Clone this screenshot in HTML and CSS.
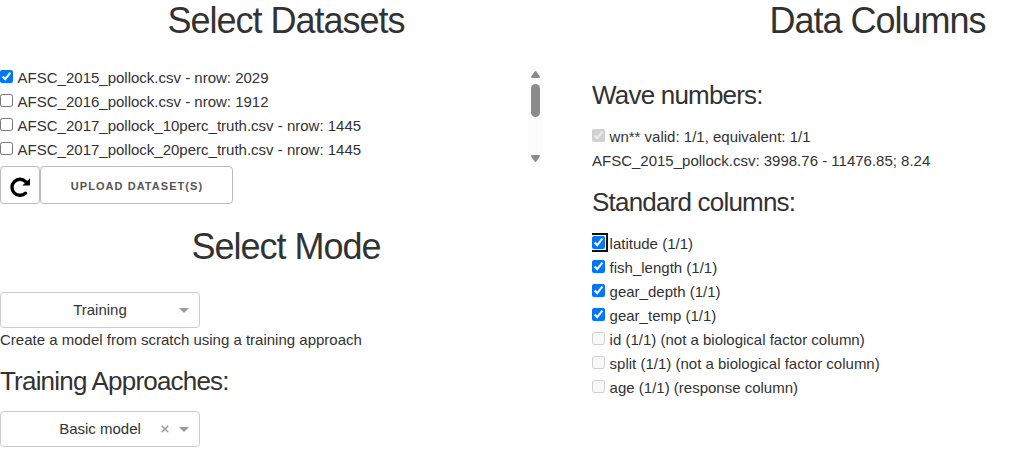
FILE: index.html
```html
<!DOCTYPE html>
<html lang="en">
<head>
<meta charset="utf-8">
<title>Datasets</title>
<link rel="stylesheet" href="styles.css">
</head>
<body>
<main class="layout">
  <section class="column">
    <h2 class="title">Select Datasets</h2>
    <div class="dataset-list">
      <div class="options">
        <label class="option"><input class="check" type="checkbox" checked> AFSC_2015_pollock.csv - nrow: 2029</label>
        <label class="option"><input class="check" type="checkbox"> AFSC_2016_pollock.csv - nrow: 1912</label>
        <label class="option"><input class="check" type="checkbox"> AFSC_2017_pollock_10perc_truth.csv - nrow: 1445</label>
        <label class="option"><input class="check" type="checkbox"> AFSC_2017_pollock_20perc_truth.csv - nrow: 1445</label>
      </div>
      <svg class="scrollbar" viewBox="0 0 15 99" aria-hidden="true">
        <path d="M7.5 6 11 11H4z" class="thumb arrow"/>
        <rect x="3" y="18" width="9" height="33" rx="4.5" class="thumb"/>
        <path d="M7.5 95 11 90H4z" class="thumb arrow"/>
      </svg>
    </div>
    <div class="actions">
      <button class="button button-icon" aria-label="Refresh">
        <svg class="refresh" viewBox="0 0 20 20"><path d="M15.4 16.2A8 8 0 1 1 15.6 4.6" class="refresh-arc"/><path d="M20 1.2V8.6H12.4z"/></svg>
      </button>
      <button class="button button-upload">Upload Dataset(s)</button>
    </div>
    <h2 class="title title-mode">Select Mode</h2>
    <div class="select">
      <span class="value">Training</span>
      <span class="controls"><span class="caret"></span></span>
    </div>
    <p class="text">Create a model from scratch using a training approach</p>
    <h4 class="subtitle">Training Approaches:</h4>
    <div class="select">
      <span class="value">Basic model</span>
      <span class="controls"><svg class="clear" viewBox="0 0 8 8"><path d="M.7.7 7.3 7.3M7.3.7.7 7.3"/></svg><span class="caret"></span></span>
    </div>
  </section>
  <section class="column column-data">
    <h2 class="title">Data Columns</h2>
    <h4 class="subtitle">Wave numbers:</h4>
    <label class="option"><input class="check" type="checkbox" checked disabled> wn** valid: 1/1, equivalent: 1/1</label>
    <p class="text">AFSC_2015_pollock.csv: 3998.76 - 11476.85; 8.24</p>
    <h4 class="subtitle">Standard columns:</h4>
    <div class="options">
      <label class="option"><input class="check check-focus" type="checkbox" checked> latitude (1/1)</label>
      <label class="option"><input class="check" type="checkbox" checked> fish_length (1/1)</label>
      <label class="option"><input class="check" type="checkbox" checked> gear_depth (1/1)</label>
      <label class="option"><input class="check" type="checkbox" checked> gear_temp (1/1)</label>
      <label class="option"><input class="check" type="checkbox" disabled> id (1/1) (not a biological factor column)</label>
      <label class="option"><input class="check" type="checkbox" disabled> split (1/1) (not a biological factor column)</label>
      <label class="option"><input class="check" type="checkbox" disabled> age (1/1) (response column)</label>
    </div>
  </section>
</main>
</body>
</html>
```
FILE: styles.css
```css
* { box-sizing: border-box; }
body {
  margin: 0;
  background: #fff;
  color: #323232;
  font: 15px/24px "Liberation Sans", Arial, sans-serif;
}
.layout { display: flex; gap: 20px; }
.column { flex: 0 0 572px; }
.column-data { flex: 1; min-width: 0; }
.title {
  margin: -2px 0 23px;
  font-size: 36px;
  font-weight: 300;
  line-height: 45px;
  letter-spacing: -1px;
  text-align: center;
}
.title-mode { margin-top: 20px; }
.column-data .title { padding-left: 127px; }
.subtitle {
  margin: 12px 0;
  font-size: 26px;
  font-weight: 300;
  line-height: 35px;
  letter-spacing: -0.8px;
}
.title + .subtitle { margin-top: 35px; }
.text { margin: 0; }
.dataset-list { display: flex; justify-content: space-between; width: 543px; height: 100px; overflow: hidden; }
.scrollbar { width: 15px; height: 99px; background: #fcfcfc; }
.thumb { fill: #8b8b8b; }
.arrow { stroke: #8b8b8b; stroke-width: 2; stroke-linejoin: round; }
.options { overflow: hidden; flex: 1; }
.option { display: flex; gap: 4.6px; }
.check { width: 13px; height: 13px; margin: 4px 0 0; }
.check-focus { outline: 2px solid #101010; outline-offset: 1px; border-radius: 2px; }
.actions { display: flex; }
.button {
  height: 38px;
  padding: 0;
  border: 1px solid #bbb;
  border-radius: 4px;
  background: transparent;
  color: #555;
  font: 600 11px/36px "Liberation Sans", Arial, sans-serif;
  letter-spacing: 1.05px;
  text-transform: uppercase;
}
.button-icon { display: flex; align-items: center; justify-content: center; width: 40px; padding-top: 4px; }
.button-upload { width: 193px; padding: 2px 0 0 1px; line-height: 34px; }
.refresh { width: 20px; height: 20px; fill: #000; }
.refresh-arc { fill: none; stroke: #000; stroke-width: 3.4; stroke-linecap: round; }
.select {
  display: flex;
  align-items: center;
  justify-content: center;
  position: relative;
  width: 200px;
  height: 36px;
  border: 1px solid #ccc;
  border-radius: 4px;
  color: #333;
}
.select + .subtitle { margin-top: 11px; }
.controls { display: flex; align-items: center; gap: 10px; position: absolute; right: 10px; top: 5px; height: 24px; }
.clear { width: 8px; height: 8px; margin-top: -1px; fill: none; stroke: #999; stroke-width: 1.5; }
.caret { border: 5px solid transparent; border-top-color: #999; border-bottom: 0; }
```
